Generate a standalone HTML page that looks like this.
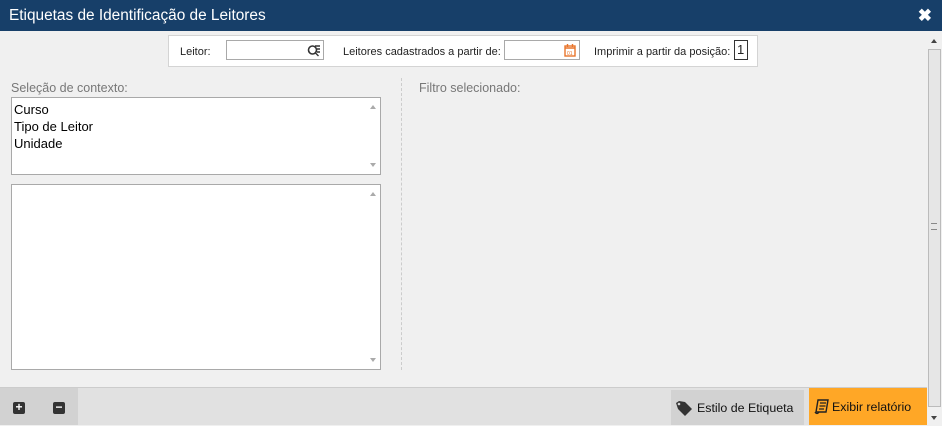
<!DOCTYPE html>
<html><head><meta charset="utf-8"><style>
*{box-sizing:border-box;margin:0;padding:0}
body{width:942px;height:425px;overflow:hidden;background:#f0f0f0;font-family:"Liberation Sans",Tahoma,sans-serif;position:relative}
.title{position:absolute;left:0;top:0;width:942px;height:31px;background:#173f69;color:#fff;font-size:15.4px;line-height:31px;padding-left:9px}
.x{position:absolute;right:10px;top:0;font-weight:bold;font-size:17px}
.filt{position:absolute;left:168px;top:35px;width:590px;height:32px;background:#fff;border:1px solid #d4d4d4;font-size:11px;color:#222}
.filt span{position:absolute;top:10px;white-space:nowrap}
.inp{position:absolute;top:4px;height:20px;border:1px solid #a9a9a9;background:#fff}
.lbl{position:absolute;font-size:12.5px;color:#777}
.box{position:absolute;background:#fff;border:1px solid #a9a9a9}
.sb{position:absolute;right:0;top:0;bottom:0;width:14px}
.sb .u,.sb .d{position:absolute;left:4px;width:0;height:0;border-left:3px solid transparent;border-right:3px solid transparent}
.sb .u{top:7px;border-bottom:4px solid #aaa}
.sb .d{bottom:7px;border-top:4px solid #aaa}
.list{font-size:13px;color:#000;padding:3px 2px;line-height:17px}
.foot{position:absolute;left:0;top:387px;width:927px;height:38px;background:#e1e1e1;border-top:1px solid #ccc}
.pm{position:absolute;top:14px;width:12px;height:12px;background:#333;border-radius:2px;color:#fff;font-size:12px;line-height:11px;text-align:center;font-weight:bold}
.vs{position:absolute;left:927px;top:31px;width:15px;height:394px;background:#f0f0f0}
</style></head><body>
<div class="title">Etiquetas de Identificação de Leitores<span class="x">✖</span></div>
<div class="filt">
<span style="left:11px">Leitor:</span>
<div class="inp" style="left:57px;width:98px"><svg style="position:absolute;right:2px;top:2px" width="14" height="14" viewBox="0 0 14 14"><circle cx="5.5" cy="7" r="4" fill="none" stroke="#333" stroke-width="1.6"/><path d="M8.5 10l3 3M8 3h5M10 6h3M10 9h3" stroke="#333" stroke-width="1.4"/></svg></div>
<span style="left:174px">Leitores cadastrados a partir de:</span>
<div class="inp" style="left:335px;width:76px"><svg style="position:absolute;right:3px;top:2px" width="12" height="14" viewBox="0 0 12 14"><rect x="1" y="3" width="10" height="10" fill="none" stroke="#e8742a" stroke-width="1.4"/><path d="M1 5h10M3.5 1v3M8.5 1v3" stroke="#e8742a" stroke-width="1.4"/><text x="3" y="12" font-size="5" fill="#e8742a">01</text></svg></div>
<span style="left:425px">Imprimir a partir da posição:</span>
<div class="inp" style="left:565px;width:14px;border-color:#333;font-size:13px;line-height:18px;padding-left:2px">1</div>
</div>
<div class="lbl" style="left:11px;top:81px">Seleção de contexto:</div>
<div class="lbl" style="left:419px;top:81px">Filtro selecionado:</div>
<div style="position:absolute;left:401px;top:78px;height:292px;border-left:1px dashed #ccc"></div>
<div class="box list" style="left:11px;top:97px;width:370px;height:78px">Curso<br>Tipo de Leitor<br>Unidade<div class="sb"><i class="u"></i><i class="d"></i></div></div>
<div class="box" style="left:11px;top:184px;width:370px;height:186px"><div class="sb"><i class="u"></i><i class="d"></i></div></div>
<div class="foot">
<div style="position:absolute;left:0;top:0;width:78px;height:37px;background:#d2d2d2"></div>
<div class="pm" style="left:13px">+</div><div class="pm" style="left:53px">−</div>
<div style="position:absolute;left:671px;top:2px;width:133px;height:35px;background:#d2d2d2;font-size:12.4px;line-height:36px;padding-left:26px;color:#111">
<svg style="position:absolute;left:4px;top:10px" width="18" height="18" viewBox="0 0 18 18"><path d="M1 3l3-2 6 1 7 7-7 7-7-7z" fill="#333"/><circle cx="4" cy="4" r="1.3" fill="#d2d2d2"/></svg>Estilo de Etiqueta</div>
<div style="position:absolute;left:809px;top:0;width:118px;height:37px;background:#ffa726;font-size:12.4px;line-height:38px;padding-left:23px;color:#111">
<svg style="position:absolute;left:5px;top:11px" width="16" height="16" viewBox="0 0 16 16"><path d="M4 1h10l-2 12H2z" fill="none" stroke="#222" stroke-width="1.4"/><path d="M6 4h6M5.5 7h6M5 10h5M1 13c1 2 3 2 4 0" stroke="#222" stroke-width="1.2" fill="none"/></svg>Exibir relatório</div>
</div>
<div class="vs">
<div style="position:absolute;left:4px;top:8px;border-left:3px solid transparent;border-right:3px solid transparent;border-bottom:4px solid #444"></div>
<div style="position:absolute;left:1px;top:18px;width:13px;height:358px;background:#e6e6e6;border:1px solid #bbb"></div>
<div style="position:absolute;left:4px;top:192px;width:6px;height:7px;border-top:1px solid #888;border-bottom:1px solid #888"></div>
<div style="position:absolute;left:4px;top:385px;border-left:3px solid transparent;border-right:3px solid transparent;border-top:4px solid #444"></div>
</div>
</body></html>
